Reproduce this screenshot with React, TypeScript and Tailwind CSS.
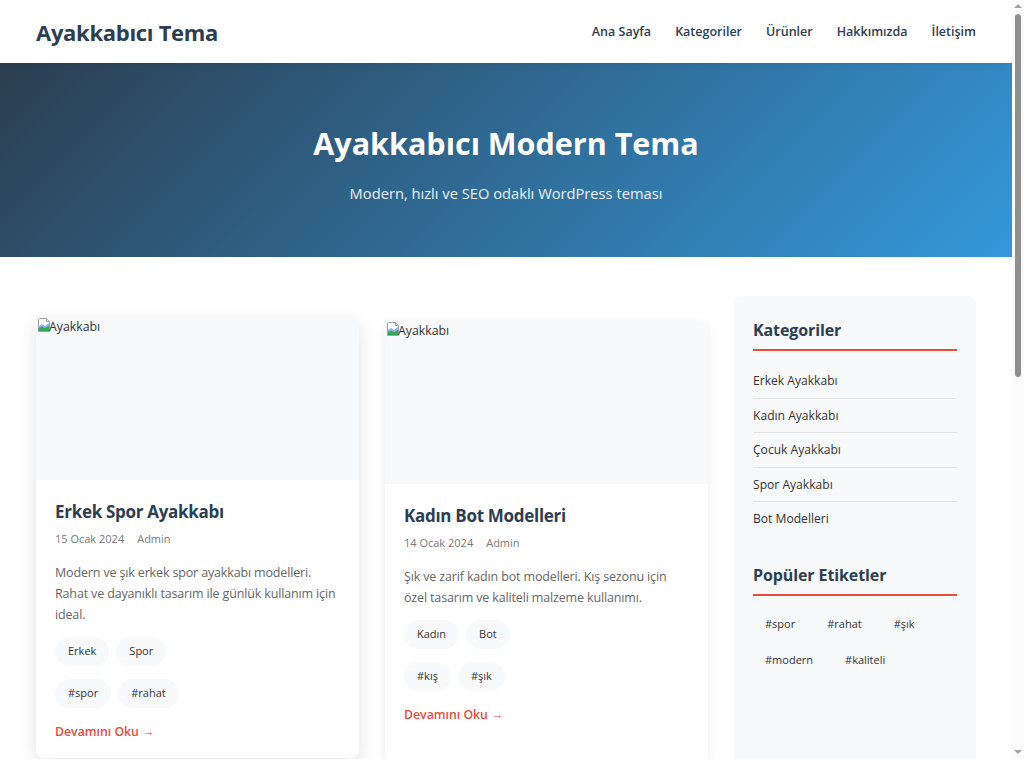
import React from "react";

const BrokenImg = () => (
  <svg width="16" height="16" viewBox="0 0 16 16" className="shrink-0">
    <path d="M2.5 1.5h8l3 3v10h-11z" fill="#fff" stroke="#9aa0a6" />
    <path d="M10.5 1.5v3h3" fill="#e8eaed" stroke="#9aa0a6" />
    <path d="M3 9l3-2 3 2 4-3v5H3z" fill="#8ab4f8" />
    <path d="M3 14v-3l3-1.5 3 1.5 4-2v5z" fill="#34a853" />
  </svg>
);

type Post = {
  title: string;
  date: string;
  desc: string;
  cats: string[];
  tags: string[];
};

const posts: Post[] = [
  {
    title: "Erkek Spor Ayakkabı",
    date: "15 Ocak 2024",
    desc: "Modern ve şık erkek spor ayakkabı modelleri. Rahat ve dayanıklı tasarım ile günlük kullanım için ideal.",
    cats: ["Erkek", "Spor"],
    tags: ["#spor", "#rahat"],
  },
  {
    title: "Kadın Bot Modelleri",
    date: "14 Ocak 2024",
    desc: "Şık ve zarif kadın bot modelleri. Kış sezonu için özel tasarım ve kaliteli malzeme kullanımı.",
    cats: ["Kadın", "Bot"],
    tags: ["#kış", "#şık"],
  },
  {
    title: "Çocuk Ayakkabı",
    date: "13 Ocak 2024",
    desc: "Çocuklar için rahat ve sağlıklı ayakkabı modelleri. Renkli ve eğlenceli tasarımlar.",
    cats: ["Çocuk"],
    tags: ["#çocuk", "#renkli"],
  },
  {
    title: "Klasik Erkek Ayakkabı",
    date: "12 Ocak 2024",
    desc: "Özel günler ve iş hayatı için klasik erkek ayakkabı modelleri. Deri ve şık tasarım.",
    cats: ["Erkek", "Klasik"],
    tags: ["#klasik", "#deri"],
  },
];

function Pill({ children }: { children: React.ReactNode }) {
  return (
    <span className="h-[29px] px-[13px] flex items-center rounded-full bg-[#f8f9fa] text-[11px] text-[#333]">
      {children}
    </span>
  );
}

function Card({ p, hovered }: { p: Post; hovered?: boolean }) {
  return (
    <article
      className={
        hovered
          ? "self-start bg-white rounded-lg overflow-hidden -translate-y-[4px] shadow-[0_6px_18px_rgba(0,0,0,0.12)]"
          : "bg-white rounded-lg overflow-hidden shadow-[0_2px_10px_rgba(0,0,0,0.08)]"
      }
    >
      <div className="h-[163px] bg-[#f8f9fa]">
        <div className="flex items-start text-[12.3px] leading-[17px] text-[#333]">
          <BrokenImg />
          <span className="-ml-[3px] mt-[1px]">Ayakkabı</span>
        </div>
      </div>
      <div className="px-[19px] pt-5 pb-[18px]">
        <h2 className="text-[17px] leading-[24px] font-bold tracking-[-0.3px] text-[#2c3e50]">{p.title}</h2>
        <div className="mt-[7px] flex gap-[13px] text-[11px] leading-[16px] text-[#777]">
          <span>{p.date}</span>
          <span>Admin</span>
        </div>
        <p className="mt-[15px] text-[12.5px] leading-[21px] tracking-[-0.15px] text-[#666]">{p.desc}</p>
        <div className="mt-[12px] flex flex-wrap gap-[7px]">
          {p.cats.map((c) => (
            <Pill key={c}>{c}</Pill>
          ))}
        </div>
        <div className="mt-[13px] flex flex-wrap gap-[7px]">
          {p.tags.map((c) => (
            <Pill key={c}>{c}</Pill>
          ))}
        </div>
        <a className="mt-[16px] block text-[12.3px] leading-[16px] font-semibold text-[#e74c3c]">
          Devamını Oku →
        </a>
      </div>
    </article>
  );
}

function Scrollbar() {
  return (
    <div className="fixed right-0 top-0 h-screen w-[12px] bg-[#fbfbfb] z-50">
      <svg className="absolute left-[2px] top-[3px]" width="8" height="6" viewBox="0 0 8 6">
        <path d="M0 5L4 1l4 4z" fill="#a3a3a3" />
      </svg>
      <div className="absolute left-[3px] top-[14px] h-[363px] w-[6px] rounded-full bg-[#8f8f8f]" />
      <svg className="absolute left-[2px] bottom-[4px]" width="8" height="6" viewBox="0 0 8 6">
        <path d="M0 1l4 4 4-4z" fill="#a3a3a3" />
      </svg>
    </div>
  );
}

export default function App() {
  const nav = ["Ana Sayfa", "Kategoriler", "Ürünler", "Hakkımızda", "İletişim"];
  const cats = ["Erkek Ayakkabı", "Kadın Ayakkabı", "Çocuk Ayakkabı", "Spor Ayakkabı", "Bot Modelleri"];
  const tags = ["#spor", "#rahat", "#şık", "#modern", "#kaliteli"];
  return (
    <div className="bg-white">
      <Scrollbar />
      <div
        className="w-[1012px] bg-white text-[#333]"
        style={{ fontFamily: '"Open Sans", "Noto Sans", sans-serif' }}
      >
        <header className="bg-white shadow-[0_2px_8px_rgba(0,0,0,0.06)] relative z-10">
          <div className="mx-auto w-[940px] h-[63px] flex items-center justify-between">
            <div className="mt-[2px] text-[22px] font-bold text-[#2c3e50] tracking-[-0.3px]">Ayakkabıcı Tema</div>
            <nav className="mt-[2px] flex gap-[24px] text-[12.5px] font-semibold text-[#2c3e50]">
              {nav.map((n) => (
                <a key={n}>{n}</a>
              ))}
            </nav>
          </div>
        </header>

        <section className="h-[194px] bg-[linear-gradient(135deg,#2c3e50_0%,#3498db_100%)] flex flex-col items-center text-white">
          <h1 className="mt-[60px] text-[30.5px] leading-[40px] font-bold">Ayakkabıcı Modern Tema</h1>
          <p className="mt-[20px] text-[14.7px] leading-[20px] text-white/90">
            Modern, hızlı ve SEO odaklı WordPress teması
          </p>
        </section>

        <main className="mx-auto w-[940px] pt-[39px] pb-[40px] grid grid-cols-[672px_242px] gap-[26px]">
          <div className="pt-[25px] grid grid-cols-2 gap-[26px] content-start">
            {posts.map((p, i) => (
              <Card key={p.title} p={p} hovered={i === 0} />
            ))}
          </div>
          <aside className="bg-[#f8f9fa] rounded-lg px-[19px] pt-[22px] pb-5">
            <div className="mb-[27px]">
              <h3 className="text-[16px] leading-[24px] font-bold tracking-[-0.1px] text-[#2c3e50] pb-[7px] border-b-2 border-[#e74c3c]">
                Kategoriler
              </h3>
              <ul className="mt-[13px]">
                {cats.map((c) => (
                  <li
                    key={c}
                    className="py-[8px] text-[12.1px] leading-[17.5px] text-[#333] border-b border-[#e3e3e3] last:border-b-0"
                  >
                    {c}
                  </li>
                ))}
              </ul>
            </div>
            <div>
              <h3 className="text-[16px] leading-[24px] font-bold tracking-[-0.1px] text-[#2c3e50] pb-[7px] border-b-2 border-[#e74c3c]">
                Popüler Etiketler
              </h3>
              <div className="mt-[15px] flex flex-wrap gap-2">
                {tags.map((t) => (
                  <span key={t} className="h-[28px] px-3 flex items-center text-[11px] text-[#333]">
                    {t}
                  </span>
                ))}
              </div>
            </div>
          </aside>
        </main>

        <footer className="bg-[#2c3e50] text-white/80 h-[280px] flex items-center justify-center text-[13px]">
          © 2024 Ayakkabıcı Tema. Tüm hakları saklıdır.
        </footer>
      </div>
    </div>
  );
}
